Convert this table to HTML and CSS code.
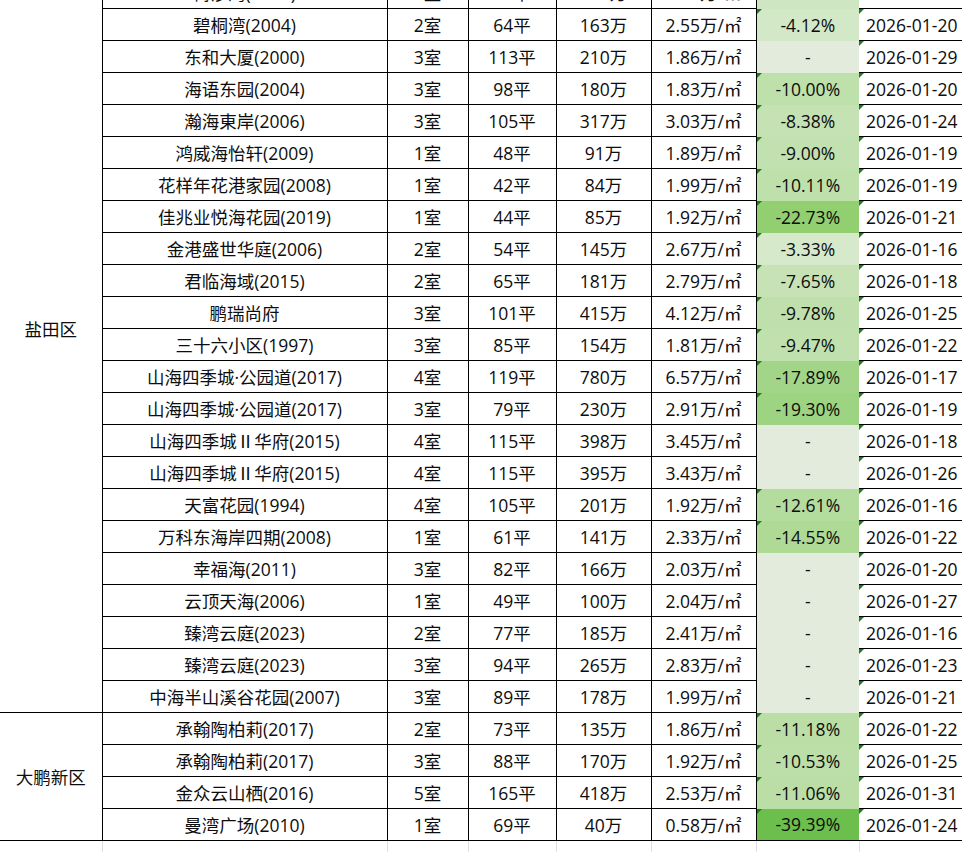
FILE: index.html
```html
<!DOCTYPE html>
<html lang="zh-CN">
<head>
<meta charset="utf-8">
<title>盐田区 大鹏新区 房源</title>
<link rel="stylesheet" href="styles.css">
</head>
<body>
<table class="sheet">
<colgroup>
<col class="c-dist"><col class="c-name"><col class="c-room"><col class="c-area"><col class="c-total"><col class="c-unit"><col class="c-pct"><col class="c-date">
</colgroup>
<tbody>
<tr><td class="dist" rowspan="24">盐田区</td><td>海景园(2002)</td><td>2室</td><td>78平</td><td>196万</td><td>2.51万/㎡</td><td class="pct" style="background:#d4e9c8">-5.21%</td><td class="date">2026-01-18</td></tr>
<tr><td>梅沙湾(2003)</td><td>3室</td><td>96平</td><td>238万</td><td>2.48万/㎡</td><td class="pct" style="background:#cfe6c2">-6.02%</td><td class="date">2026-01-21</td></tr>
<tr><td>碧桐湾(2004)</td><td>2室</td><td>64平</td><td>163万</td><td>2.55万/㎡</td><td class="pct" style="background:#d3e8c6">-4.12%</td><td class="date">2026-01-20</td></tr>
<tr><td>东和大厦(2000)</td><td>3室</td><td>113平</td><td>210万</td><td>1.86万/㎡</td><td class="pct nil">-</td><td class="date">2026-01-29</td></tr>
<tr><td>海语东园(2004)</td><td>3室</td><td>98平</td><td>180万</td><td>1.83万/㎡</td><td class="pct" style="background:#bee0ab">-10.00%</td><td class="date">2026-01-20</td></tr>
<tr><td>瀚海東岸(2006)</td><td>3室</td><td>105平</td><td>317万</td><td>3.03万/㎡</td><td class="pct" style="background:#c4e2b3">-8.38%</td><td class="date">2026-01-24</td></tr>
<tr><td>鸿威海怡轩(2009)</td><td>1室</td><td>48平</td><td>91万</td><td>1.89万/㎡</td><td class="pct" style="background:#c2e1b0">-9.00%</td><td class="date">2026-01-19</td></tr>
<tr><td>花样年花港家园(2008)</td><td>1室</td><td>42平</td><td>84万</td><td>1.99万/㎡</td><td class="pct" style="background:#bee0ab">-10.11%</td><td class="date">2026-01-19</td></tr>
<tr><td>佳兆业悦海花园(2019)</td><td>1室</td><td>44平</td><td>85万</td><td>1.92万/㎡</td><td class="pct" style="background:#91cf71">-22.73%</td><td class="date">2026-01-21</td></tr>
<tr><td>金港盛世华庭(2006)</td><td>2室</td><td>54平</td><td>145万</td><td>2.67万/㎡</td><td class="pct" style="background:#d6e9ca">-3.33%</td><td class="date">2026-01-16</td></tr>
<tr><td>君临海域(2015)</td><td>2室</td><td>65平</td><td>181万</td><td>2.79万/㎡</td><td class="pct" style="background:#c7e3b6">-7.65%</td><td class="date">2026-01-18</td></tr>
<tr><td>鹏瑞尚府</td><td>3室</td><td>101平</td><td>415万</td><td>4.12万/㎡</td><td class="pct" style="background:#bfe0ac">-9.78%</td><td class="date">2026-01-25</td></tr>
<tr><td>三十六小区(1997)</td><td>3室</td><td>85平</td><td>154万</td><td>1.81万/㎡</td><td class="pct" style="background:#c0e1ae">-9.47%</td><td class="date">2026-01-22</td></tr>
<tr><td>山海四季城·公园道(2017)</td><td>4室</td><td>119平</td><td>780万</td><td>6.57万/㎡</td><td class="pct" style="background:#a2d587">-17.89%</td><td class="date">2026-01-17</td></tr>
<tr><td>山海四季城·公园道(2017)</td><td>3室</td><td>79平</td><td>230万</td><td>2.91万/㎡</td><td class="pct" style="background:#9dd481">-19.30%</td><td class="date">2026-01-19</td></tr>
<tr><td>山海四季城Ⅱ华府(2015)</td><td>4室</td><td>115平</td><td>398万</td><td>3.45万/㎡</td><td class="pct nil">-</td><td class="date">2026-01-18</td></tr>
<tr><td>山海四季城Ⅱ华府(2015)</td><td>4室</td><td>115平</td><td>395万</td><td>3.43万/㎡</td><td class="pct nil">-</td><td class="date">2026-01-26</td></tr>
<tr><td>天富花园(1994)</td><td>4室</td><td>105平</td><td>201万</td><td>1.92万/㎡</td><td class="pct" style="background:#b5dc9f">-12.61%</td><td class="date">2026-01-16</td></tr>
<tr><td>万科东海岸四期(2008)</td><td>1室</td><td>61平</td><td>141万</td><td>2.33万/㎡</td><td class="pct" style="background:#aeda96">-14.55%</td><td class="date">2026-01-22</td></tr>
<tr><td>幸福海(2011)</td><td>3室</td><td>82平</td><td>166万</td><td>2.03万/㎡</td><td class="pct nil">-</td><td class="date">2026-01-20</td></tr>
<tr><td>云顶天海(2006)</td><td>1室</td><td>49平</td><td>100万</td><td>2.04万/㎡</td><td class="pct nil">-</td><td class="date">2026-01-27</td></tr>
<tr><td>臻湾云庭(2023)</td><td>2室</td><td>77平</td><td>185万</td><td>2.41万/㎡</td><td class="pct nil">-</td><td class="date">2026-01-16</td></tr>
<tr><td>臻湾云庭(2023)</td><td>3室</td><td>94平</td><td>265万</td><td>2.83万/㎡</td><td class="pct nil">-</td><td class="date">2026-01-23</td></tr>
<tr><td>中海半山溪谷花园(2007)</td><td>3室</td><td>89平</td><td>178万</td><td>1.99万/㎡</td><td class="pct nil">-</td><td class="date">2026-01-21</td></tr>
<tr><td class="dist" rowspan="4">大鹏新区</td><td>承翰陶柏莉(2017)</td><td>2室</td><td>73平</td><td>135万</td><td>1.86万/㎡</td><td class="pct" style="background:#badea6">-11.18%</td><td class="date">2026-01-22</td></tr>
<tr><td>承翰陶柏莉(2017)</td><td>3室</td><td>88平</td><td>170万</td><td>1.92万/㎡</td><td class="pct" style="background:#bcdfa9">-10.53%</td><td class="date">2026-01-25</td></tr>
<tr><td>金众云山栖(2016)</td><td>5室</td><td>165平</td><td>418万</td><td>2.53万/㎡</td><td class="pct" style="background:#bbdea6">-11.06%</td><td class="date">2026-01-31</td></tr>
<tr class="last"><td>曼湾广场(2010)</td><td>1室</td><td>69平</td><td>40万</td><td>0.58万/㎡</td><td class="pct" style="background:#6cbf4c">-39.39%</td><td class="date">2026-01-24</td></tr>
<tr class="blank"><td class="dist"></td><td></td><td></td><td></td><td></td><td></td><td></td><td></td></tr>
</tbody>
</table>
</body>
</html>
```

FILE: styles.css
```css
html, body {
  margin: 0;
  padding: 0;
  background: #ffffff;
  overflow: hidden;
}

.sheet {
  border-collapse: collapse;
  table-layout: fixed;
  width: 965px;
  margin-top: -56px;
  font-family: "Open Sans", "Noto Sans CJK SC", sans-serif;
  font-size: 17.5px;
  color: #0d0d0d;
}

.c-dist { width: 102px; }
.c-name { width: 285px; }
.c-room { width: 81px; }
.c-area { width: 88px; }
.c-total { width: 95px; }
.c-unit { width: 105px; }
.c-pct { width: 103px; }
.c-date { width: 106px; }

.sheet tr { height: 32px; }

.sheet td {
  border: 1px solid #000;
  padding: 0;
  text-align: center;
  vertical-align: middle;
  white-space: nowrap;
  overflow: hidden;
  line-height: 30px;
}

.sheet td.dist {
  border-left: none;
}

.sheet td.pct {
  position: relative;
  border-top: none;
  border-bottom: none;
  border-right: none;
}

.sheet td.nil {
  background: #e3ecdc;
}

.sheet td.date {
  position: relative;
  border-left: none;
}

.sheet td.pct:not(.nil)::before,
.sheet td.date::before {
  content: "";
  position: absolute;
  left: 0;
  top: 0;
  width: 0;
  height: 0;
  border-top: 5px solid #1f7a1f;
  border-right: 5px solid transparent;
}

.sheet tr.last td {
  border-bottom: 1px solid #000;
}

.sheet tr.blank td {
  border-color: #dedede;
  border-bottom: none;
  height: 20px;
}

.sheet tr.blank td.dist {
  border-left: none;
  border-right-color: #dedede;
}
```
